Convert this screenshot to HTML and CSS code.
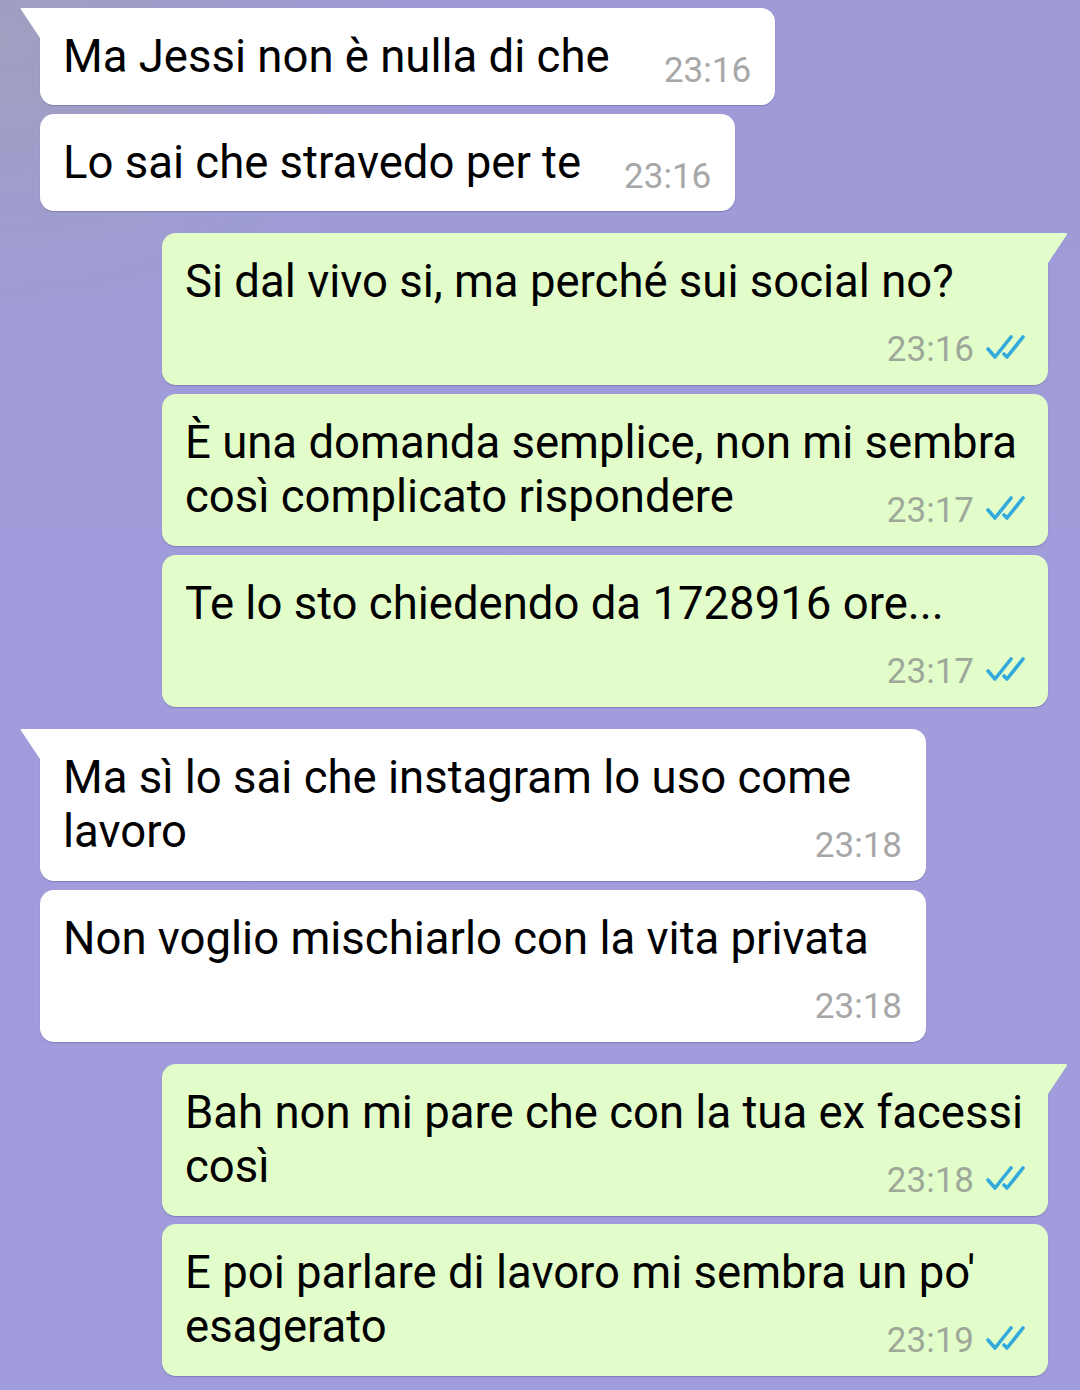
FILE: index.html
```html
<!DOCTYPE html>
<html>

<head>
    <meta charset="utf-8">
    <meta name="viewport" content="width=device-width, initial-scale=1">
    <title>chat</title>
    <link rel="stylesheet" href="styles.css">
</head>

<body>
    <div class="chat">
        <div class="group">
            <div class="bubble in tail fit">
                <div class="row">
                    <div class="text">Ma Jessi non è nulla di che&nbsp;</div>
                    <div class="meta"><span class="time">23:16</span></div>
                </div>
            </div>
            <div class="bubble in fit">
                <div class="row">
                    <div class="text">Lo sai che stravedo per te</div>
                    <div class="meta"><span class="time">23:16</span></div>
                </div>
            </div>
        </div>

        <div class="group">
            <div class="bubble out tail">
                <div class="text">Si dal vivo si, ma perché sui social no?</div>
                <div class="meta"><span class="time">23:16</span><svg class="ticks" width="40" height="26" viewBox="0 0 40 26"><path d="M2 14 L9 22 L25 2 M18 19 L21 22 L37 2"/></svg></div>
            </div>
            <div class="bubble out">
                <div class="text">È una domanda semplice, non mi sembra</div>
                <div class="row">
                    <div class="text">così complicato rispondere</div>
                    <div class="meta"><span class="time">23:17</span><svg class="ticks" width="40" height="26" viewBox="0 0 40 26"><path d="M2 14 L9 22 L25 2 M18 19 L21 22 L37 2"/></svg></div>
                </div>
            </div>
            <div class="bubble out">
                <div class="text">Te lo sto chiedendo da 1728916 ore...</div>
                <div class="meta"><span class="time">23:17</span><svg class="ticks" width="40" height="26" viewBox="0 0 40 26"><path d="M2 14 L9 22 L25 2 M18 19 L21 22 L37 2"/></svg></div>
            </div>
        </div>

        <div class="group">
            <div class="bubble in tail">
                <div class="text">Ma sì lo sai che instagram lo uso come</div>
                <div class="row">
                    <div class="text">lavoro</div>
                    <div class="meta"><span class="time">23:18</span></div>
                </div>
            </div>
            <div class="bubble in">
                <div class="text">Non voglio mischiarlo con la vita privata</div>
                <div class="meta"><span class="time">23:18</span></div>
            </div>
        </div>

        <div class="group tight">
            <div class="bubble out tail">
                <div class="text">Bah non mi pare che con la tua ex facessi</div>
                <div class="row">
                    <div class="text">così</div>
                    <div class="meta"><span class="time">23:18</span><svg class="ticks" width="40" height="26" viewBox="0 0 40 26"><path d="M2 14 L9 22 L25 2 M18 19 L21 22 L37 2"/></svg></div>
                </div>
            </div>
            <div class="bubble out">
                <div class="text">E poi parlare di lavoro mi sembra un po'</div>
                <div class="row">
                    <div class="text">esagerato</div>
                    <div class="meta"><span class="time">23:19</span><svg class="ticks" width="40" height="26" viewBox="0 0 40 26"><path d="M2 14 L9 22 L25 2 M18 19 L21 22 L37 2"/></svg></div>
                </div>
            </div>
        </div>
    </div>
</body>

</html>
```

FILE: styles.css
```css
html,
body {
    margin: 0;
    padding: 0;
    height: 100%;
    font-family: Roboto, "Noto Sans", sans-serif;
    background: #9f9bda;
}

body {
    background:
        radial-gradient(ellipse 420px 300px at 0 40px, rgba(160, 160, 190, 0.9), rgba(160, 160, 190, 0) 100%),
        linear-gradient(180deg, #9d9ad6 0%, #a19ddc 50%, #a09cdb 100%);
    overflow: hidden;
}

.chat {
    display: flex;
    flex-direction: column;
    gap: 22px;
    padding: 8px 32px 0 40px;
}

.group {
    display: flex;
    flex-direction: column;
    gap: 9px;
}

.group.tight {
    gap: 8px;
}

.bubble {
    position: relative;
    box-sizing: border-box;
    width: 886px;
    padding: 22px 24px 0 23px;
    border-radius: 14px;
    color: #000;
    box-shadow: 0 1px 1px rgba(60, 50, 110, 0.3);
}

.bubble.in {
    background: #fff;
    align-self: flex-start;
}

.bubble.out {
    background: #e2fdc9;
    align-self: flex-end;
    padding-right: 22px;
}

.bubble.fit {
    width: auto;
}

.bubble.tail.in {
    border-top-left-radius: 0;
}

.bubble.tail.out {
    border-top-right-radius: 0;
}

.bubble.tail::before {
    content: "";
    position: absolute;
    top: 0;
    width: 20px;
    height: 30px;
    background: inherit;
}

.bubble.tail.in::before {
    left: -20px;
    clip-path: polygon(0 0, 100% 0, 100% 100%);
    border-top-left-radius: 2px;
}

.bubble.tail.out::before {
    right: -20px;
    clip-path: polygon(0 0, 100% 0, 0 100%);
    border-top-right-radius: 3px;
}

.text {
    font-size: 45.5px;
    line-height: 54px;
    white-space: nowrap;
}

.row {
    display: flex;
    justify-content: space-between;
    align-items: flex-start;
    gap: 43px;
}

.meta {
    padding: 20px 0 14px;
    font-size: 35px;
    line-height: 42px;
    text-align: right;
    white-space: nowrap;
}

.bubble.fit .meta {
    padding-bottom: 13px;
}

.bubble.in .time {
    color: #a7a7a7;
}

.bubble.out .time {
    color: #9ea89a;
}

.ticks {
    margin-left: 12px;
    fill: none;
    stroke: #34a9dc;
    stroke-width: 3.6;
    stroke-linecap: round;
    stroke-linejoin: round;
}
```
